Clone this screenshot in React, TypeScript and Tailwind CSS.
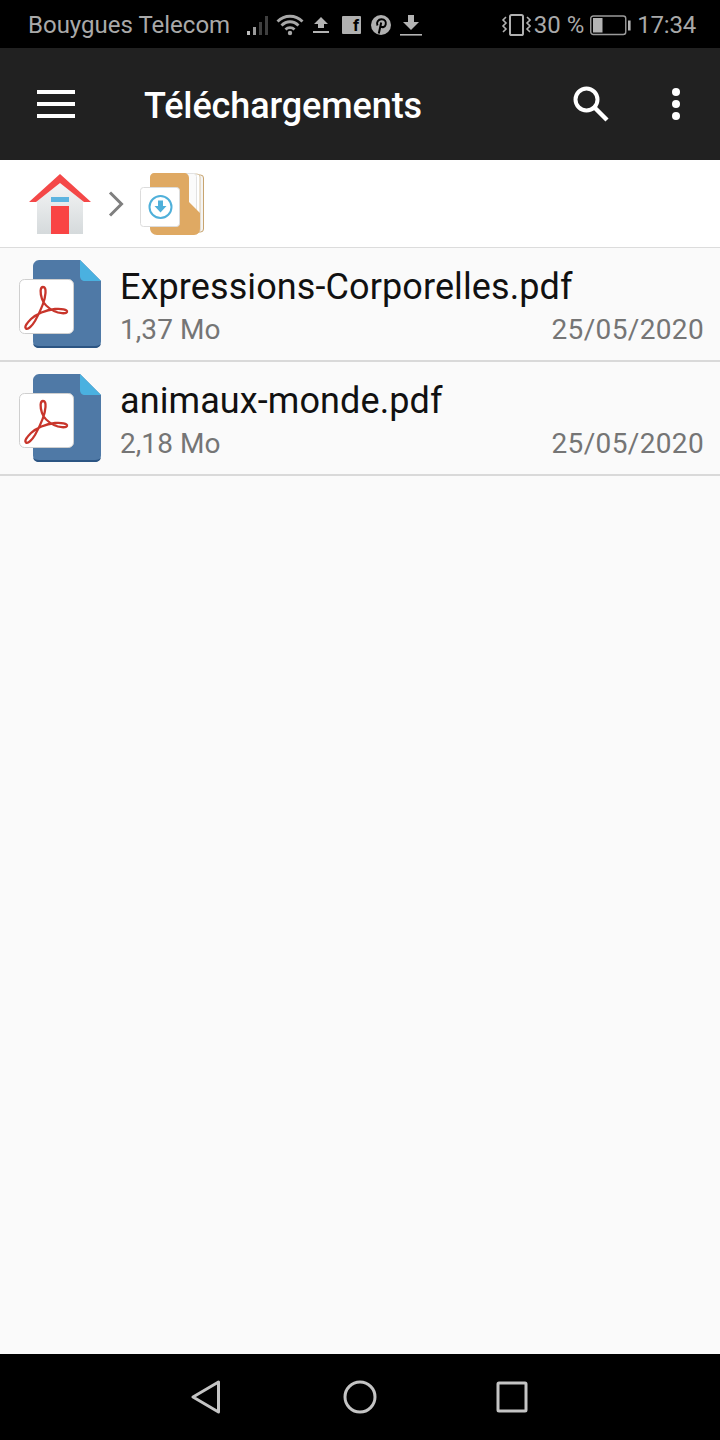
import React from 'react';

const FONT = "font-['Roboto',sans-serif]";

const SignalIcon = () => (
  <svg width="26" height="24" viewBox="0 0 26 24" className="block">
    <rect x="1" y="18" width="3" height="4" fill="#bdbdbd" />
    <rect x="7" y="14" width="3" height="8" fill="#9a9a9a" />
    <rect x="13" y="9" width="3" height="13" fill="#3f3f3f" />
    <rect x="19" y="3" width="3" height="19" fill="#3f3f3f" />
  </svg>
);

const WifiIcon = () => (
  <svg width="28" height="24" viewBox="0 0 28 24" fill="none" stroke="#a8a8a8" strokeWidth="2.8" className="block">
    <path d="M1.5 8.5C8.5 1.5 19.5 1.5 26.5 8.5" />
    <path d="M5.5 12.5C10.5 7.5 17.5 7.5 22.5 12.5" />
    <path d="M9.5 16.5C12 14 16 14 18.5 16.5" />
    <circle cx="14" cy="20" r="2.2" fill="#a8a8a8" stroke="none" />
  </svg>
);

const UploadIcon = () => (
  <svg width="16" height="18" viewBox="0 0 16 18" className="block">
    <path d="M8 1L15 8H11V12H5V8H1Z" fill="#b4b4b4" />
    <rect x="0" y="15" width="16" height="2" fill="#b4b4b4" />
  </svg>
);

const FacebookIcon = () => (
  <div className={`w-[19px] h-[18px] bg-[#b0b0b0] flex items-end justify-end pr-[2px] rounded-[1px] ${FONT}`}>
    <span className="text-[17px] leading-[17px] font-bold text-black">f</span>
  </div>
);

const PinterestIcon = () => (
  <svg width="20" height="20" viewBox="0 0 20 20" className="block">
    <circle cx="10" cy="10" r="10" fill="#b0b0b0" />
    <path d="M6.5 10.5C5 7.5 7.2 4.2 10.5 4.2C13.8 4.2 15.4 6.6 14.7 9.4C14.1 12 11.2 13 9.6 11.2M10.2 7.5L7.8 18.5" fill="none" stroke="#000" strokeWidth="2" />
  </svg>
);

const DownloadStatusIcon = () => (
  <svg width="24" height="24" viewBox="0 0 24 24" className="block">
    <path d="M9 2H15V9H20L12 17L4 9H9Z" fill="#b4b4b4" />
    <rect x="1" y="21" width="22" height="1.6" fill="#b4b4b4" />
  </svg>
);

const VibrateIcon = () => (
  <svg width="30" height="24" viewBox="0 0 30 24" fill="none" stroke="#b0b0b0" className="block">
    <rect x="9" y="2" width="13" height="20" rx="1.6" strokeWidth="2" />
    <path d="M5 4L2 7L5 10L2 13L5 16L2 19" strokeWidth="1.6" />
    <path d="M26 4L29 7L26 10L29 13L26 16L29 19" strokeWidth="1.6" />
  </svg>
);

const BatteryIcon = () => (
  <svg width="41" height="21" viewBox="0 0 41 21" fill="none" className="block">
    <rect x="0.75" y="1" width="35" height="18.5" rx="2.5" stroke="#9a9a9a" strokeWidth="1.4" />
    <rect x="3" y="3" width="9.5" height="14.5" fill="#b4b4b4" />
    <rect x="38" y="5.5" width="2.6" height="10" fill="#b4b4b4" />
  </svg>
);

const HomeIcon = () => (
  <svg width="64" height="62" viewBox="0 0 64 62" className="block">
    <defs>
      <linearGradient id="wall" x1="0" y1="0" x2="0" y2="1">
        <stop offset="0" stopColor="#f7f7f7" />
        <stop offset="1" stopColor="#d5dadc" />
      </linearGradient>
    </defs>
    <path d="M9 25L32 5L55 25V61H9Z" fill="url(#wall)" />
    <path d="M1 29L32 1L63 29H56L32 10L8 29Z" fill="#f44848" />
    <rect x="23" y="24" width="18" height="5" fill="#5db4e0" />
    <rect x="23" y="33" width="18" height="28" fill="#f94444" />
  </svg>
);

const FolderIcon = () => (
  <svg width="66" height="66" viewBox="0 0 66 66" className="block">
    <rect x="44" y="4" width="19.5" height="57" rx="3" fill="#f4f4f4" stroke="#c8a46e" strokeWidth="1" />
    <rect x="44" y="3" width="16" height="59" rx="3" fill="#ffffff" stroke="#d9c6a6" strokeWidth="1" />
    <rect x="44" y="2.5" width="12.5" height="60" rx="3" fill="#fbfbfb" stroke="#e2e2e2" strokeWidth="1" />
    <path d="M14 2H44C47 2 49 4 49 7V31L60 42V57C60 61 58 64 54 64H17C13 64 10 61 10 57V6C10 4 12 2 14 2Z" fill="#dfa963" />
    <rect x="0.5" y="16.5" width="39" height="39" rx="3" fill="#ffffff" stroke="#dcdcdc" />
    <circle cx="20.5" cy="36" r="11" fill="none" stroke="#4fb0da" strokeWidth="2" />
    <path d="M18 29.5H23V35H26.5L20.5 41.5L14.5 35H18Z" fill="#4fb0da" />
  </svg>
);

const PdfIcon = () => (
  <svg width="86" height="90" viewBox="0 0 86 90" className="block">
    <path d="M21 1H62L83 22V82C83 86 80 89 77 89H21C18 89 15 86 15 82V7C15 4 18 1 21 1Z" fill="#4f79a6" />
    <path d="M15 84C15 87 18 89 21 89H77C80 89 83 87 83 84C82.5 86 80 87 77 87H21C18 87 15.5 86 15 84Z" fill="#2c5583" />
    <path d="M62 1L83 22H67C64 22 62 20 62 17Z" fill="#4ab1e0" />
    <rect x="1.5" y="20.5" width="54" height="54" rx="5" fill="#ffffff" stroke="#cfcfcf" strokeWidth="1" />
    <path
      d="M25 28C22 28 22 34 24 40C26 46 30 49 36 52C41 54.5 48 55 49 53C50 50.5 43 49.5 37 50C28 51 18 55 13 60C9 64 6 68 8 69.5C10 71 14 67 17 62C22 53 27 43 27.5 34C27.8 30 27 28 25 28Z"
      fill="none"
      stroke="#c8352b"
      strokeWidth="2.3"
    />
  </svg>
);

const StatusBar = () => (
  <div className={`h-[48px] bg-black flex items-center pl-[28px] pr-[24px] pt-[2px] text-[#a9a9a9] ${FONT}`}>
    <span className="text-[24px] leading-none whitespace-nowrap">Bouygues Telecom</span>
    <div className="ml-[16px] flex items-center">
      <SignalIcon />
      <div className="ml-[4px]"><WifiIcon /></div>
      <div className="ml-[9px]"><UploadIcon /></div>
      <div className="ml-[13px]"><FacebookIcon /></div>
      <div className="ml-[10px]"><PinterestIcon /></div>
      <div className="ml-[8px]"><DownloadStatusIcon /></div>
    </div>
    <div className="ml-auto flex items-center">
      <VibrateIcon />
      <span className="ml-[3px] text-[24px] leading-none whitespace-nowrap">30 %</span>
      <div className="ml-[6px]"><BatteryIcon /></div>
      <span className="ml-[6px] text-[24px] leading-none tracking-[-0.2px]">17:34</span>
    </div>
  </div>
);

const Toolbar = () => (
  <div className={`h-[112px] bg-[#212121] flex items-center text-white ${FONT}`}>
    <div className="ml-[37px] w-[38px] flex flex-col gap-[8px]">
      <div className="h-[4px] bg-white" />
      <div className="h-[4px] bg-white" />
      <div className="h-[4px] bg-white" />
    </div>
    <h1 className="ml-[69px] pt-[4px] text-[36px] leading-none font-medium tracking-[-0.1px]">Téléchargements</h1>
    <div className="ml-auto mr-[40px] flex items-center gap-[62px]">
      <svg width="38" height="38" viewBox="0 0 38 38" fill="none" stroke="#fff" className="block">
        <circle cx="14.5" cy="14.5" r="11" strokeWidth="4" />
        <path d="M22.5 22.5L35 35" strokeWidth="4.4" />
      </svg>
      <div className="flex flex-col gap-[4px]">
        <div className="w-[8px] h-[8px] rounded-full bg-white" />
        <div className="w-[8px] h-[8px] rounded-full bg-white" />
        <div className="w-[8px] h-[8px] rounded-full bg-white" />
      </div>
    </div>
  </div>
);

const Breadcrumb = () => (
  <div className="h-[88px] bg-white border-b border-[#dcdcdc] flex items-center pl-[28px]">
    <HomeIcon />
    <svg width="16" height="26" viewBox="0 0 16 26" fill="none" stroke="#7f7f7f" strokeWidth="3" className="block ml-[16px]">
      <path d="M2 1.5L13.5 13L2 24.5" />
    </svg>
    <div className="ml-[16px]"><FolderIcon /></div>
  </div>
);

const FileRow: React.FC<{ name: string; size: string; date: string }> = ({ name, size, date }) => (
  <div className={`h-[114px] border-b-2 border-[#d9d9d9] flex items-center pl-[18px] pr-[16px] ${FONT}`}>
    <PdfIcon />
    <div className="ml-[16px] flex-1 min-w-0 pt-[7px]">
      <div className="text-[36px] leading-[44px] tracking-[0.1px] text-[#111]">{name}</div>
      <div className="mt-[1px] flex justify-between text-[28px] leading-[40px] tracking-[0.05px] text-[#757575]">
        <span>{size}</span>
        <span className="tracking-[0.35px]">{date}</span>
      </div>
    </div>
  </div>
);

const NavBar = () => (
  <div className="h-[86px] bg-black flex items-center justify-center pr-[2px]">
    <svg width="30" height="34" viewBox="0 0 30 34" fill="none" stroke="#c4c4c4" strokeWidth="3" strokeLinejoin="round" className="block">
      <path d="M2 17L27.5 2V32Z" />
    </svg>
    <svg width="34" height="34" viewBox="0 0 34 34" fill="none" stroke="#c4c4c4" strokeWidth="3" className="block ml-[122px]">
      <circle cx="17" cy="17" r="15" />
    </svg>
    <svg width="32" height="32" viewBox="0 0 32 32" fill="none" stroke="#c4c4c4" strokeWidth="3" strokeLinejoin="round" className="block ml-[119px]">
      <rect x="2" y="2" width="28" height="28" rx="1" />
    </svg>
  </div>
);

export default function App() {
  return (
    <div className="w-[720px] h-[1440px] bg-[#fafafa] flex flex-col overflow-hidden">
      <StatusBar />
      <Toolbar />
      <Breadcrumb />
      <FileRow name="Expressions-Corporelles.pdf" size="1,37 Mo" date="25/05/2020" />
      <FileRow name="animaux-monde.pdf" size="2,18 Mo" date="25/05/2020" />
      <div className="flex-1" />
      <NavBar />
    </div>
  );
}
